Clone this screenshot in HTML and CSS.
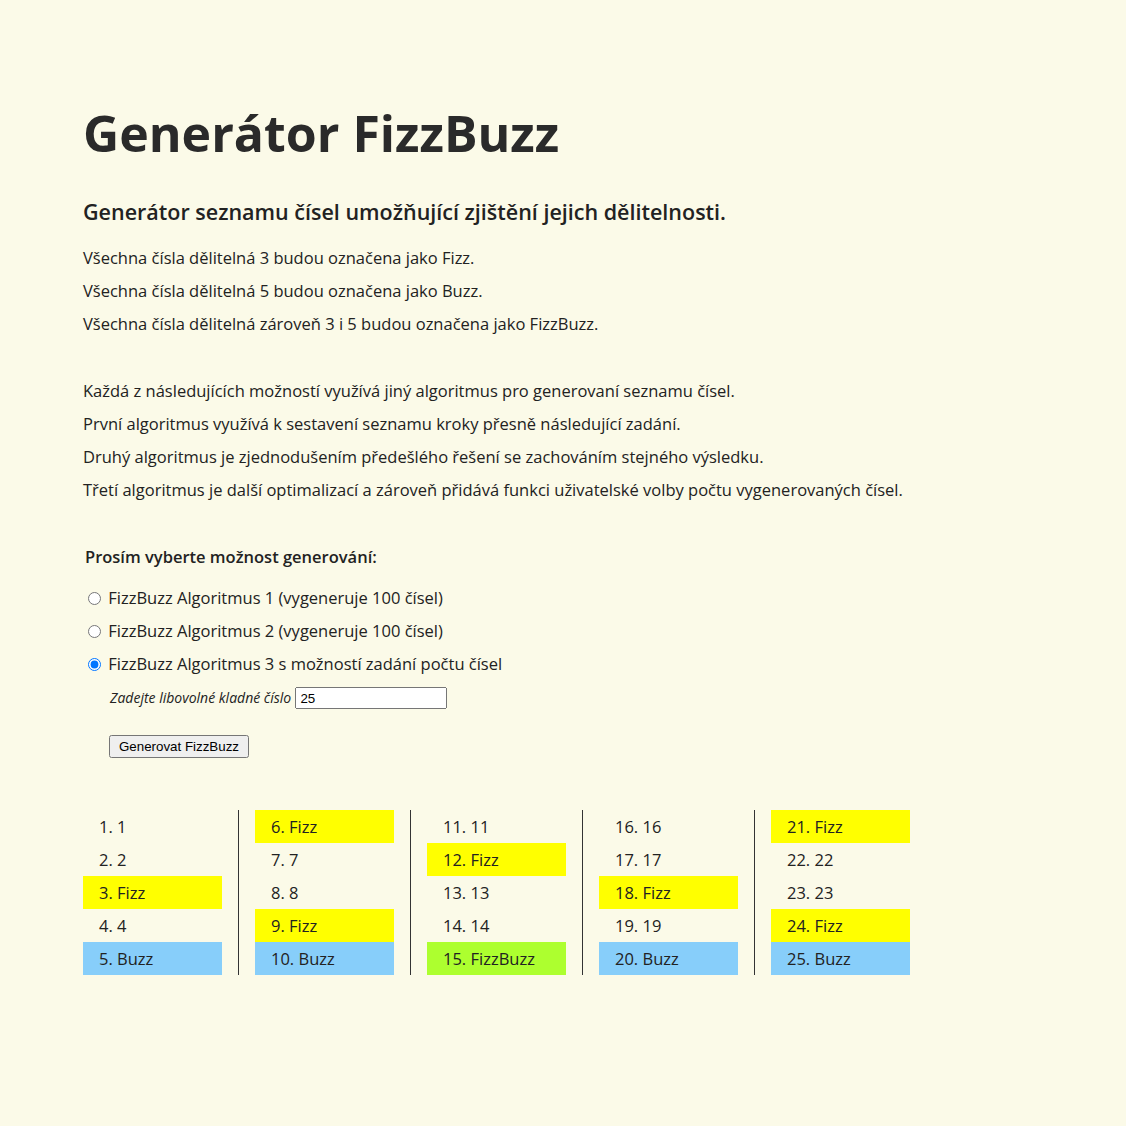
FILE: index.html
```
<!DOCTYPE html>
<html lang="cs">
<head>
<meta charset="utf-8">
<title>Generátor FizzBuzz</title>
<link rel="stylesheet" href="styles.css">
</head>
<body>
<main class="page">
  <h1 class="title">Generátor FizzBuzz</h1>
  <h2 class="subtitle">Generátor seznamu čísel umožňující zjištění jejich dělitelnosti.</h2>
  <div class="block">
    <p>Všechna čísla dělitelná 3 budou označena jako Fizz.</p>
    <p>Všechna čísla dělitelná 5 budou označena jako Buzz.</p>
    <p>Všechna čísla dělitelná zároveň 3 i 5 budou označena jako FizzBuzz.</p>
  </div>
  <div class="block">
    <p>Každá z následujících možností využívá jiný algoritmus pro generovaní seznamu čísel.</p>
    <p>První algoritmus využívá k sestavení seznamu kroky přesně následující zadání.</p>
    <p>Druhý algoritmus je zjednodušením předešlého řešení se zachováním stejného výsledku.</p>
    <p>Třetí algoritmus je další optimalizací a zároveň přidává funkci uživatelské volby počtu vygenerovaných čísel.</p>
  </div>
  <form class="form">
    <p class="prompt">Prosím vyberte možnost generování:</p>
    <label class="option"><input type="radio" name="alg"> FizzBuzz Algoritmus 1 (vygeneruje 100 čísel)</label>
    <label class="option"><input type="radio" name="alg"> FizzBuzz Algoritmus 2 (vygeneruje 100 čísel)</label>
    <label class="option"><input type="radio" name="alg" checked> FizzBuzz Algoritmus 3 s možností zadání počtu čísel</label>
    <div class="count"><label class="count-label" for="n">Zadejte libovolné kladné číslo</label> <input id="n" type="text" value="25"></div>
    <div class="actions"><button type="button">Generovat FizzBuzz</button></div>
  </form>
  <ol class="results">
    <li>1</li><li>2</li><li class="fizz">Fizz</li><li>4</li><li class="buzz">Buzz</li>
    <li class="fizz">Fizz</li><li>7</li><li>8</li><li class="fizz">Fizz</li><li class="buzz">Buzz</li>
    <li>11</li><li class="fizz">Fizz</li><li>13</li><li>14</li><li class="fizzbuzz">FizzBuzz</li>
    <li>16</li><li>17</li><li class="fizz">Fizz</li><li>19</li><li class="buzz">Buzz</li>
    <li class="fizz">Fizz</li><li>22</li><li>23</li><li class="fizz">Fizz</li><li class="buzz">Buzz</li>
  </ol>
</main>
</body>
</html>
```
FILE: styles.css
```
html, body {
  margin: 0;
  padding: 0;
  background: #fbfae8;
}
body {
  font-family: "Open Sans", "Noto Sans", sans-serif;
  color: #222;
  font-size: 16.5px;
}
.page {
  padding: 101px 83px 40px;
}
.title {
  margin: 0;
  font-size: 50px;
  line-height: 1.3;
  font-weight: 700;
  color: #2a2a2a;
}
.subtitle {
  margin: 33px 0 0;
  font-size: 21.5px;
  line-height: 1.2;
  font-weight: 600;
}
.block {
  margin-top: 16px;
}
.block + .block {
  margin-top: 34px;
}
.block p {
  margin: 0;
  line-height: 33px;
}
.form {
  margin-top: 34px;
}
.prompt {
  margin: 0 0 8px;
  padding-left: 2px;
  line-height: 33px;
  font-weight: 600;
}
.option {
  display: block;
  line-height: 33px;
}
.option input {
  margin: 0 3px 0 5px;
  vertical-align: -1px;
}
.count {
  padding-left: 27px;
  margin-top: 2px;
  line-height: 30px;
}
.count-label {
  font-size: 14px;
  font-style: italic;
}
.count input {
  font-family: "Liberation Sans", Arial, sans-serif;
  font-size: 13.33px;
  width: 152px;
  height: 22px;
  box-sizing: border-box;
  padding: 1px 3px;
  vertical-align: 0;
}
.actions {
  padding-left: 26px;
  margin-top: 20px;
}
.actions button {
  font-family: "Liberation Sans", Arial, sans-serif;
  font-size: 13.33px;
  padding: 2px 8px;
}
.results {
  margin: 52px 0 0;
  padding: 0;
  width: 827px;
  column-count: 5;
  column-gap: 33px;
  column-rule: 1px solid #333;
  list-style-position: inside;
}
.results li {
  line-height: 33px;
  padding-left: 16px;
  break-inside: avoid;
}
.results .fizz {
  background: #ffff00;
}
.results .buzz {
  background: #87cefa;
}
.results .fizzbuzz {
  background: #adff2f;
}
```
